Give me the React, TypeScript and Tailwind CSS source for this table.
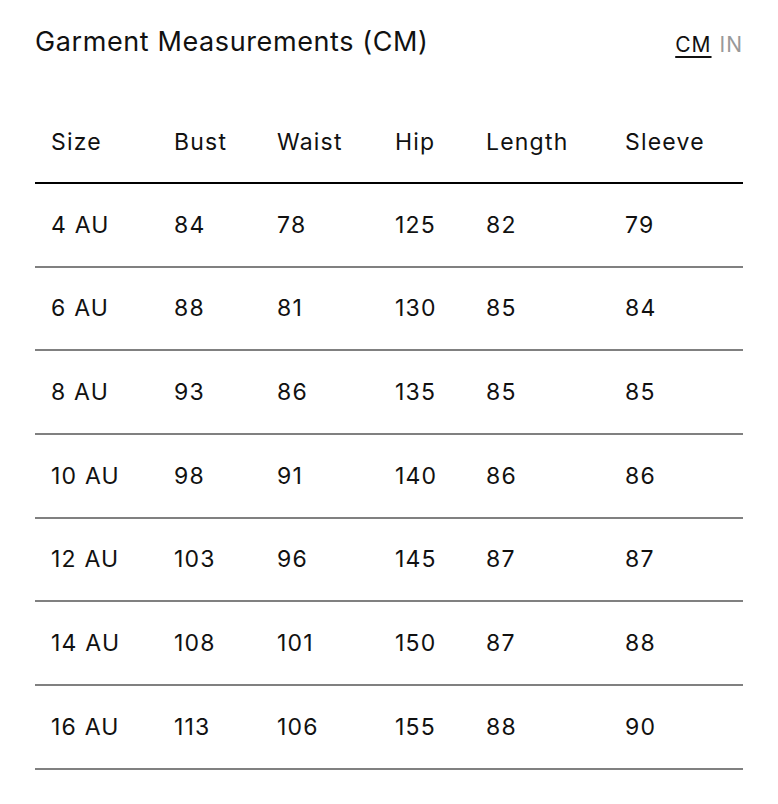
const columns = ['Size', 'Bust', 'Waist', 'Hip', 'Length', 'Sleeve'];

const rows = [
  ['4 AU', '84', '78', '125', '82', '79'],
  ['6 AU', '88', '81', '130', '85', '84'],
  ['8 AU', '93', '86', '135', '85', '85'],
  ['10 AU', '98', '91', '140', '86', '86'],
  ['12 AU', '103', '96', '145', '87', '87'],
  ['14 AU', '108', '101', '150', '87', '88'],
  ['16 AU', '113', '106', '155', '88', '90'],
];

// column widths in px, matching the reference spacing
const widths = ['w-[123px]', 'w-[103px]', 'w-[118px]', 'w-[91px]', 'w-[139px]', 'flex-1'];

export default function App() {
  return (
    <div className="min-h-screen bg-white px-[35px] pt-[26px] text-[#111] font-['Inter',sans-serif]">
      {/* Header */}
      <div className="flex items-start justify-between">
        <h2 className="text-[27px] leading-8 tracking-[0.6px]">Garment Measurements (CM)</h2>
        <div className="flex items-center gap-[8px] pt-[7px] text-[21px] leading-6 tracking-[1px]">
          <button className="underline decoration-[2px] underline-offset-[4px]">CM</button>
          <button className="text-[#999]">IN</button>
        </div>
      </div>

      {/* Table */}
      <div className="mt-[43px]">
        <div className="flex h-[83px] items-center border-b-2 border-black">
          {columns.map((c, i) => (
            <div key={c} className={`${widths[i]} shrink-0 pl-4 pt-[1px] text-[23px] tracking-[1.2px]`}>
              {c}
            </div>
          ))}
        </div>
        {rows.map((r) => (
          <div key={r[0]} className="flex h-[83.67px] items-center border-b-2 border-[#808080]">
            {r.map((v, i) => (
              <div key={i} className={`${widths[i]} shrink-0 pl-4 text-[23px] tracking-[1.2px]`}>
                {v}
              </div>
            ))}
          </div>
        ))}
      </div>
    </div>
  );
}
